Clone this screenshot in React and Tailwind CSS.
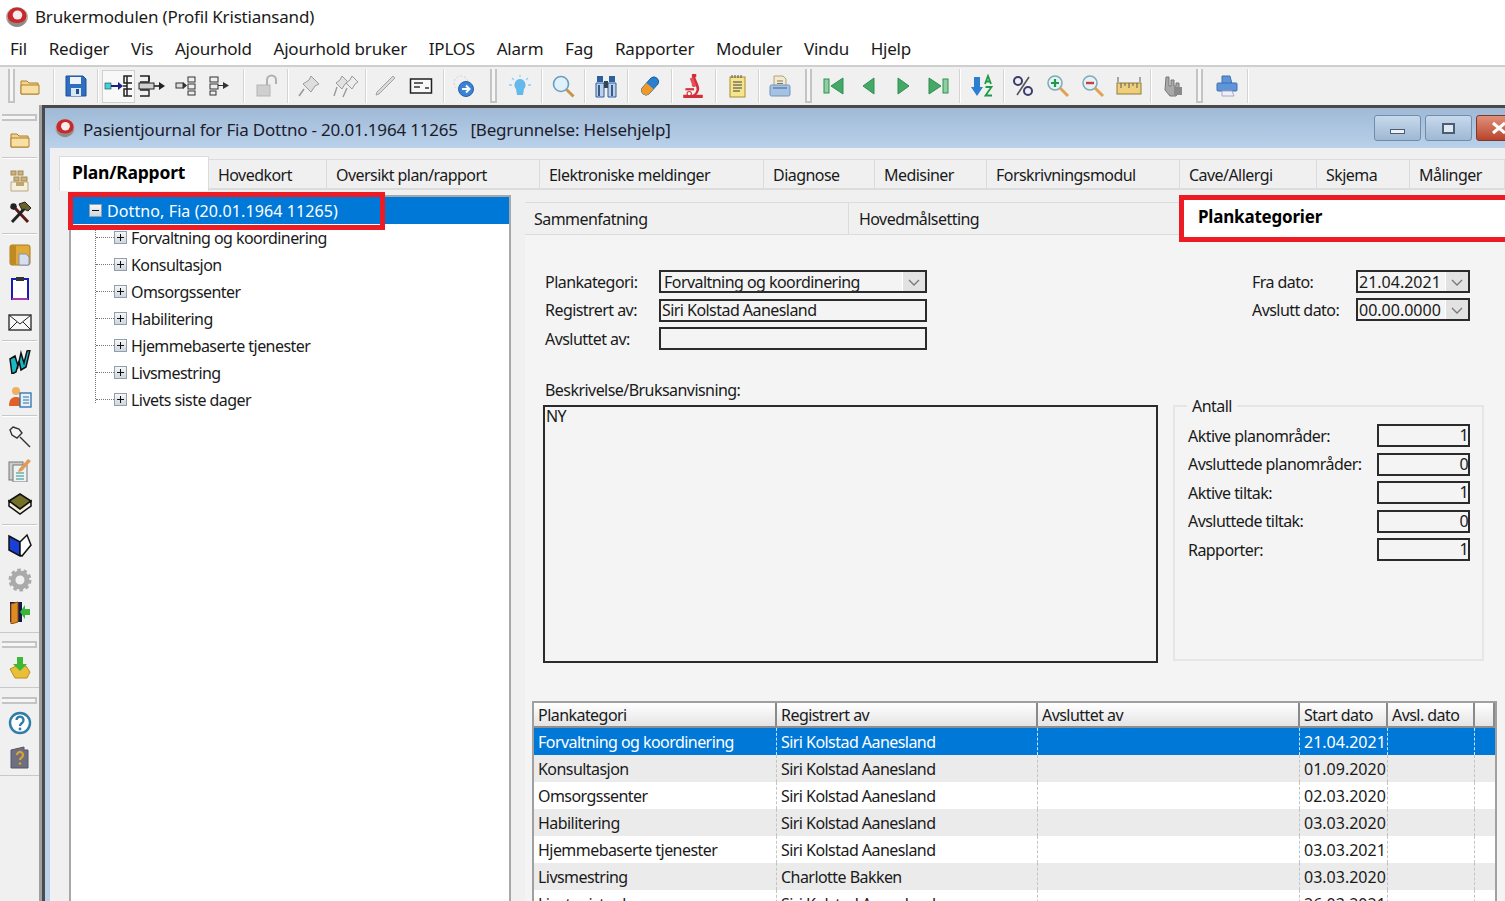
import React from "react";

const S = ({ children, w = 24, h = 24, vb = "0 0 24 24" }) => (
  <svg width={w} height={h} viewBox={vb} className="shrink-0 block">{children}</svg>
);

const Logo = ({ s = 22 }) => (
  <S w={s} h={s}>
    <ellipse cx="12" cy="12" rx="11" ry="10" fill="#b9b4b4" />
    <ellipse cx="12" cy="11" rx="9.500" ry="8.500" fill="#c8282c" />
    <ellipse cx="12.500" cy="10" rx="4.800" ry="4.600" fill="#f6ecec" />
    <path d="M2 14q10 8 20 0q-3 8-10 8t-10-8z" fill="#8f8a8a" />
  </S>
);

const I = {
  folder: () => (
    <S>
      <path d="M3 7h6l2 2h9v11H3z" fill="#f3d48b" stroke="#b07f2a" />
      <path d="M3 11h18v9H3z" fill="#f8dfa4" stroke="#b07f2a" />
    </S>
  ),
  save: () => (
    <S>
      <path d="M2 2h17l3 3v17H2z" fill="#2f6fc0" stroke="#1f4f96" />
      <rect x="6" y="3" width="11" height="7" fill="#eef3fa" />
      <rect x="7" y="14" width="10" height="8" fill="#dbe6f5" />
      <rect x="12" y="15" width="3" height="5" fill="#1f4f96" />
    </S>
  ),
  treeIn: () => (
    <S w={30} h={26} vb="0 0 30 26">
      <rect x="1" y="10" width="6" height="6" fill="#36d6e0" stroke="#333" strokeWidth=".6" />
      <path d="M7 13h9" stroke="#1a237e" strokeWidth="2" />
      <path d="M14 9l5 4-5 4z" fill="#1a237e" />
      <path d="M28 3h-8v7h8M19 13h4M28 16h-8v7h8M23 3v20" fill="none" stroke="#222" strokeWidth="1.5" />
    </S>
  ),
  treeOut: () => (
    <S w={28} h={26} vb="0 0 28 26">
      <path d="M2 3h9v6H2M2 17h9v6H2" fill="none" stroke="#222" strokeWidth="1.4" />
      <rect x="1" y="10" width="15" height="6" fill="#cfcfcf" stroke="#222" strokeWidth="1" />
      <path d="M16 13h6" stroke="#222" strokeWidth="1.6" />
      <path d="M21 9l6 4-6 4z" fill="#222" />
      <path d="M11 3v5" stroke="#222" strokeWidth="1.4" />
    </S>
  ),
  tree3: () => (
    <S>
      <rect x="3" y="9" width="7" height="5" fill="#ddd" stroke="#333" />
      <path d="M10 11h3" stroke="#333" />
      <path d="M10 8l4 3.5-4 3.5z" fill="#333" />
      <rect x="15" y="3" width="7" height="5" fill="#eee" stroke="#333" />
      <rect x="15" y="10" width="7" height="5" fill="#eee" stroke="#333" />
      <rect x="15" y="17" width="7" height="4" fill="#eee" stroke="#333" />
    </S>
  ),
  tree4: () => (
    <S>
      <rect x="3" y="3" width="8" height="5" fill="#eee" stroke="#333" />
      <rect x="3" y="10" width="8" height="5" fill="#eee" stroke="#333" />
      <rect x="3" y="17" width="6" height="4" fill="#eee" stroke="#333" />
      <path d="M11 11.500h6" stroke="#333" />
      <path d="M16 8l6 3.500-6 3.500z" fill="#333" />
    </S>
  ),
  lock: () => (
    <S>
      <rect x="3" y="11" width="13" height="11" fill="#cfcfcf" stroke="#b5b5b5" />
      <path d="M13 11V6a4.500 4.500 0 0 1 9 0v4" fill="none" stroke="#b0b0b0" strokeWidth="2" />
    </S>
  ),
  pin: () => (
    <S>
      <path d="M14 2l8 8-4 2-4 6-8-8 6-4z" fill="#dedede" stroke="#9a9a9a" />
      <path d="M7 15l-5 7" stroke="#9a9a9a" strokeWidth="1.6" />
    </S>
  ),
  pins: () => (
    <S w={28} h={26} vb="0 0 28 26">
      <path d="M10 3l6 6-3 2-3 5-6-6 4-3z" fill="#e2e2e2" stroke="#999" />
      <path d="M20 3l6 6-3 2-3 5-6-6 4-3z" fill="#ededed" stroke="#999" />
      <path d="M5 14l-3 9M15 15l-4 9" stroke="#999" strokeWidth="1.4" />
    </S>
  ),
  pencil: () => (
    <S>
      <path d="M20 2l2 2L6 20l-3 1 1-3z" fill="#d9d9d9" stroke="#a3a3a3" />
    </S>
  ),
  card: () => (
    <S>
      <rect x="1.500" y="5" width="21" height="14" fill="#f8f8f8" stroke="#222" strokeWidth="1.500" />
      <path d="M5 9h9M5 13h6M16 14h4" stroke="#333" strokeWidth="1.400" />
    </S>
  ),
  goto: () => (
    <S>
      <circle cx="10" cy="9" r="7" fill="none" stroke="#cfcfcf" strokeDasharray="2 2" />
      <circle cx="15" cy="15" r="7.500" fill="#3b82d6" stroke="#2563a8" />
      <path d="M11 15h7M15 11.500l3.500 3.500-3.500 3.500" fill="none" stroke="#fff" strokeWidth="2" />
    </S>
  ),
  bulb: () => (
    <S>
      <path d="M12 5a6 6 0 0 1 4 10l-1 6H9l-1-6a6 6 0 0 1 4-10z" fill="#63b9ea" />
      <path d="M12 1v2M4 4l2 2M20 4l-2 2M1 11h3M20 11h3" stroke="#8bd0f2" strokeWidth="1.300" />
    </S>
  ),
  mag: () => (
    <S>
      <circle cx="10" cy="10" r="7.500" fill="#dff1fb" stroke="#6d9cc0" strokeWidth="1.600" />
      <path d="M15.500 15.500l7 7" stroke="#c7944c" strokeWidth="3" />
    </S>
  ),
  bino: () => (
    <S>
      <rect x="3" y="2" width="6" height="6" fill="#2f5f9f" />
      <rect x="15" y="2" width="6" height="6" fill="#2f5f9f" />
      <path d="M2 9h8v14H2zM14 9h8v14h-8z" fill="#bcd0e6" stroke="#2f5f9f" />
      <rect x="10" y="7" width="4" height="7" fill="#345" />
      <path d="M5 11v11M18 11v11" stroke="#1c3d70" strokeWidth="1.600" />
    </S>
  ),
  pill: () => (
    <S>
      <path d="M5 14L14 4a4.700 4.700 0 0 1 7 6l-9 10a4.700 4.700 0 0 1-7-6z" fill="#2b7fd0" stroke="#1f5f9f" />
      <path d="M5 14l4.500-5 7 6L12 20a4.700 4.700 0 0 1-7-6z" fill="#ee9a2a" />
    </S>
  ),
  micro: () => (
    <S w={26} h={28}>
      <path d="M11 1h4v3h-1l3 7a8 8 0 0 1-2 9h6v3H3v-3h9a6 6 0 0 0 3-7l-1-1-1 1-2-1z" fill="#d32f3a" />
      <path d="M9 5l3-1 3 8-3 1z" fill="#e9505a" />
      <rect x="5" y="14" width="8" height="2" fill="#d32f3a" />
      <circle cx="8.500" cy="19" r="2" fill="#fff" stroke="#d32f3a" />
    </S>
  ),
  note: () => (
    <S>
      <rect x="5" y="3" width="15" height="20" fill="#f7e58b" stroke="#a98b35" />
      <path d="M8 8h9M8 11h9M8 14h9M8 17h7" stroke="#776" strokeWidth="1.300" />
      <path d="M7 1v3M10 1v3M13 1v3M16 1v3" stroke="#555" />
    </S>
  ),
  printer: () => (
    <S>
      <path d="M6 2h9l3 3v8H6z" fill="#f3ead2" stroke="#b5a176" />
      <rect x="2" y="11" width="20" height="11" rx="1.500" fill="#a5c2e2" stroke="#6f93bd" />
      <path d="M9 7h6M9 9.500h6" stroke="#776" />
      <rect x="5" y="13" width="14" height="2" fill="#6f93bd" />
    </S>
  ),
  first: () => (
    <S>
      <rect x="2" y="5" width="5" height="14" fill="#8fd0a2" stroke="#2f8f50" />
      <path d="M21 4v16L9 12z" fill="#46a866" stroke="#2f8f50" />
    </S>
  ),
  prev: () => (
    <S>
      <path d="M17 4v16L6 12z" fill="#46a866" stroke="#2f8f50" />
    </S>
  ),
  next: () => (
    <S>
      <path d="M7 4v16l11-8z" fill="#46a866" stroke="#2f8f50" />
    </S>
  ),
  last: () => (
    <S>
      <rect x="17" y="5" width="5" height="14" fill="#8fd0a2" stroke="#2f8f50" />
      <path d="M3 4v16l12-8z" fill="#46a866" stroke="#2f8f50" />
    </S>
  ),
  az: () => (
    <S>
      <path d="M4 3h6v10h3l-6 9-6-9h3z" fill="#2b7fd0" />
      <path d="M15 10l3-8 3 8M16 7.500h4M15.500 13h6l-6 8.500h6.500" fill="none" stroke="#1c9a44" strokeWidth="1.800" />
    </S>
  ),
  pct: () => (
    <S>
      <circle cx="7" cy="7" r="4" fill="none" stroke="#3b3b6e" strokeWidth="2" />
      <circle cx="17" cy="17" r="4" fill="none" stroke="#3b3b6e" strokeWidth="2" />
      <path d="M18 3L6 21" stroke="#555" strokeWidth="1.600" />
    </S>
  ),
  zoomIn: () => (
    <S>
      <circle cx="9" cy="9" r="7" fill="#e3f2f6" stroke="#7fa8b8" strokeWidth="1.500" />
      <path d="M5 9h8M9 5v8" stroke="#1f9a44" strokeWidth="2.200" />
      <path d="M14 14l8 8" stroke="#e2a052" strokeWidth="3" />
    </S>
  ),
  zoomOut: () => (
    <S>
      <circle cx="9" cy="9" r="7" fill="#e3f2f6" stroke="#7fa8b8" strokeWidth="1.500" />
      <path d="M5 9h8" stroke="#d23b3b" strokeWidth="2.400" />
      <path d="M14 14l8 8" stroke="#e2a052" strokeWidth="3" />
    </S>
  ),
  ruler: () => (
    <S w={26} h={24} vb="0 0 26 24">
      <rect x="1" y="9" width="24" height="11" fill="#efcf7a" stroke="#8f7a3a" />
      <path d="M5 9v5M9 9v3M13 9v5M17 9v3M21 9v5M2 3v5M24 3v5" stroke="#5a5a5a" />
    </S>
  ),
  hand: () => (
    <S>
      <path d="M5 3h3v9h2V6h3v6h2V9h3v9l-3 4H9l-5-6z" fill="#a8a8a8" stroke="#777" />
      <rect x="13" y="13" width="8" height="8" fill="#8a8a8a" />
    </S>
  ),
  print2: () => (
    <S>
      <path d="M7 2h8l2 8H7z" fill="#5f95d8" stroke="#3f6fb0" />
      <rect x="2" y="9" width="20" height="8" rx="1" fill="#5f95d8" stroke="#3f6fb0" />
      <path d="M7 17h10l2 5H7z" fill="#eef" stroke="#aab" />
    </S>
  ),
  blocks: () => (
    <S>
      <rect x="3" y="2" width="5" height="4" fill="#cdb27a" stroke="#a58a50" />
      <rect x="10" y="2" width="5" height="4" fill="#cdb27a" stroke="#a58a50" />
      <rect x="6" y="8" width="5" height="4" fill="#cdb27a" stroke="#a58a50" />
      <rect x="13" y="8" width="6" height="4" fill="#cdb27a" stroke="#a58a50" />
      <path d="M3 13h17v9H3z" fill="#f3f0e2" stroke="#bda877" />
      <rect x="8" y="13" width="8" height="4" fill="#c0a56c" />
    </S>
  ),
  tools: () => (
    <S>
      <path d="M20 21L6 6" stroke="#5b1a14" strokeWidth="3" />
      <path d="M3 3a5 5 0 0 0 0 5l3 1 3-3-1-3a5 5 0 0 0-5 0z" fill="#222" />
      <path d="M4 21L17 7" stroke="#222" strokeWidth="3" />
      <path d="M11 3l6-2 6 6-3 3-4-2-2 1z" fill="#6c6228" stroke="#222" />
    </S>
  ),
  docFold: () => (
    <S>
      <rect x="2" y="2" width="20" height="20" rx="2" fill="#e0aa38" stroke="#a87b20" />
      <rect x="2" y="2" width="6" height="20" fill="#bf8a22" />
      <path d="M11 11h7l3 3v8H11z" fill="#d6deef" stroke="#8492b4" />
    </S>
  ),
  clip: () => (
    <S>
      <rect x="4" y="3" width="16" height="20" fill="#fff" stroke="#1a1ab4" strokeWidth="2" />
      <path d="M4 23h16" stroke="#a03aa8" strokeWidth="2" />
      <rect x="8" y="1" width="8" height="4" fill="#333" />
    </S>
  ),
  mail: () => (
    <S>
      <rect x="1" y="5" width="22" height="15" fill="#f7f7f7" stroke="#222" strokeWidth="1.300" />
      <path d="M1 5l11 9 11-9M1 20l8-8M23 20l-8-8" fill="none" stroke="#222" />
    </S>
  ),
  w: () => (
    <S>
      <path d="M2 9l5-3 3 10 3-13 3 10 3-12 3-1-4 17-5 3-2-9-3 11-4 2z" fill="#18b8c4" stroke="#111" strokeWidth="1.500" />
    </S>
  ),
  person: () => (
    <S>
      <circle cx="8" cy="6" r="4" fill="#f0b060" />
      <path d="M1 21c0-7 3-9 7-9s7 2 6 9z" fill="#e0602a" />
      <rect x="12" y="8" width="11" height="14" fill="#e6f0f7" stroke="#2f70a8" strokeWidth="1.300" />
      <path d="M15 12h6M15 15h6M15 18h6" stroke="#2f70a8" />
    </S>
  ),
  pinBlack: () => (
    <S>
      <path d="M5 2l6 2 3 4-5 5-5-3-2-5z" fill="#f4f4f4" stroke="#333" strokeWidth="1.400" />
      <path d="M12 12l10 10" stroke="#333" strokeWidth="1.400" />
    </S>
  ),
  notes: () => (
    <S>
      <rect x="1" y="4" width="14" height="18" fill="#cdcdcd" stroke="#777" />
      <rect x="5" y="7" width="14" height="17" fill="#edf3f3" stroke="#777" />
      <path d="M8 15h8M8 18h8M8 21h8" stroke="#2c8b8b" />
      <path d="M11 11l9-10 3 2-9 10-4 1z" fill="#e39a55" />
    </S>
  ),
  book: () => (
    <S>
      <path d="M1 10L12 3l11 7-11 8z" fill="#747027" stroke="#111" strokeWidth="1.500" />
      <path d="M1 10v5l11 8 11-8v-5l-11 8z" fill="#f2efd8" stroke="#111" strokeWidth="1.500" />
    </S>
  ),
  blueBook: () => (
    <S>
      <path d="M1 3l11 6v14L1 17z" fill="#1a3fd6" stroke="#111" strokeWidth="1.500" />
      <path d="M12 9l7-7 4 10-9 11-2-1z" fill="#fff" stroke="#111" strokeWidth="1.500" />
    </S>
  ),
  gear: () => (
    <S>
      <circle cx="12" cy="12" r="7" fill="none" stroke="#aaaaaa" strokeWidth="5" />
      <circle cx="12" cy="12" r="10" fill="none" stroke="#aaaaaa" strokeWidth="3" strokeDasharray="3.500 2.800" />
    </S>
  ),
  door: () => (
    <S>
      <rect x="2" y="2" width="12" height="20" fill="#111a48" />
      <path d="M3 4l7-2v20l-7 2z" fill="#e08a22" stroke="#8b4f10" />
      <path d="M22 9h-5V5l-5 7 5 7v-4h5z" fill="#38b53a" />
    </S>
  ),
  basket: () => (
    <S>
      <path d="M2 13l6-3h10l4 6-3 6H7z" fill="#e9bf3a" stroke="#b98f18" />
      <path d="M9 1h6v7h4l-7 7-7-7h4z" fill="#3fb83a" />
    </S>
  ),
  help: () => (
    <S>
      <circle cx="12" cy="12" r="10" fill="#fff" stroke="#2e7ca8" strokeWidth="2.400" />
      <path d="M8.500 9a3.500 3.500 0 1 1 5.500 3c-1.300 1-2 1.500-2 3" fill="none" stroke="#2e7ca8" strokeWidth="2.400" />
      <circle cx="12" cy="18" r="1.400" fill="#2e7ca8" />
    </S>
  ),
  manual: () => (
    <S>
      <path d="M3 5l13-3v3h4v18H3z" fill="#6f6f80" stroke="#55556a" />
      <path d="M9 10a3 3 0 1 1 4.500 2.600c-1 .7-1.500 1.200-1.500 2.400" fill="none" stroke="#d9a530" strokeWidth="2.200" />
      <circle cx="12" cy="18.500" r="1.300" fill="#d9a530" />
    </S>
  ),
};

const Sep = () => <div className="w-[2px] h-[34px] bg-[#d4d4d4] border-r border-white shrink-0" />;
const Grip = () => (
  <div className="w-[13px] h-[34px] shrink-0 flex justify-center">
    <div className="w-[7px] h-[34px] border-l-2 border-r-2 border-b-2 border-[#c4c4c4] bg-[#f6f6f6]" />
  </div>
);

const Seg = ({ className, children }) => (
  <div className={`flex items-center justify-around shrink-0 h-full ${className}`}>{children}</div>
);

const Toolbar = () => (
  <div className="h-[40px] flex items-center bg-[#f0f0f0] border-t-2 border-[#cfcfcf] pl-[5px] shrink-0 overflow-hidden">
    <Grip />
    <Seg className="w-[35px] pr-[11px]"><I.folder /></Seg>
    <Sep />
    <Seg className="w-[42px]"><I.save /></Seg>
    <Sep />
    <div className="w-[144px] h-full shrink-0 flex items-center pl-[3px]">
      <div className="w-[33px] h-[33px] flex items-center justify-center bg-[#f8f8f8] border border-[#d0d0d0]"><I.treeIn /></div>
      <div className="ml-[3px]"><I.treeOut /></div>
      <div className="ml-[7px]"><I.tree3 /></div>
      <div className="ml-[10px]"><I.tree4 /></div>
    </div>
    <Sep />
    <Seg className="w-[42px]"><I.lock /></Seg>
    <Sep />
    <Seg className="w-[76px] pl-[2px]"><I.pin /><I.pins /></Seg>
    <Sep />
    <Seg className="w-[76px] pr-[4px]"><I.pencil /><I.card /></Seg>
    <Sep />
    <Seg className="w-[42px] pr-[6px]"><I.goto /></Seg>
    <Grip />
    <Seg className="w-[41px] pr-[2px]"><I.bulb /></Seg>
    <Sep />
    <Seg className="w-[41px] pr-[2px]"><I.mag /></Seg>
    <Sep />
    <Seg className="w-[41px] pr-[2px]"><I.bino /></Seg>
    <Sep />
    <Seg className="w-[42px] pr-[2px]"><I.pill /></Seg>
    <Sep />
    <Seg className="w-[42px] pr-[2px]"><I.micro /></Seg>
    <Sep />
    <Seg className="w-[41px] pr-[2px]"><I.note /></Seg>
    <Sep />
    <Seg className="w-[42px] pr-[2px]"><I.printer /></Seg>
    <Grip />
    <Seg className="w-[144px] pl-[2px] pr-[4px]"><I.first /><I.prev /><I.next /><I.last /></Seg>
    <Sep />
    <Seg className="w-[42px]"><I.az /></Seg>
    <Sep />
    <Seg className="w-[145px] pr-[3px]"><I.pct /><I.zoomIn /><I.zoomOut /><I.ruler /></Seg>
    <Sep />
    <Seg className="w-[41px]"><I.hand /></Seg>
    <Grip />
    <Seg className="w-[41px]"><I.print2 /></Seg>
    <Sep />
  </div>
);

const VSep = ({ className }) => <div className={`h-[2px] w-[35px] ml-[2px] bg-[#c8c8c8] border-b border-white shrink-0 ${className}`} />;
const VLine = ({ className }) => <div className={`h-px bg-[#c8c8c8] w-full shrink-0 ${className}`} />;
const VGrip = ({ className = "" }) => (
  <div className={`w-[35px] h-[7px] ml-[2px] border-t-2 border-b-2 border-r-2 border-[#c4c4c4] bg-[#f6f6f6] shrink-0 ${className}`} />
);
const VIcon = ({ children, className }) => (
  <div className={`w-[39px] flex items-center justify-center shrink-0 ${className}`}>{children}</div>
);

const LeftBar = () => (
  <div className="w-[39px] shrink-0 bg-[#f0f0f0] flex flex-col pt-[9px] overflow-hidden">
    <VGrip />
    <VIcon className="h-[34px] mt-[1px]"><I.folder /></VIcon>
    <VSep className="mt-[1px]" />
    <VIcon className="h-[32px] mt-[6px]"><I.blocks /></VIcon>
    <VIcon className="h-[32px]"><I.tools /></VIcon>
    <VSep className="mt-[4px]" />
    <VIcon className="h-[32px] mt-[4px]"><I.docFold /></VIcon>
    <VIcon className="h-[34px]"><I.clip /></VIcon>
    <VIcon className="h-[34px]"><I.mail /></VIcon>
    <VSep className="mt-[1px]" />
    <VIcon className="h-[32px] mt-[4px]"><I.w /></VIcon>
    <VIcon className="h-[34px] mt-[2px]"><I.person /></VIcon>
    <VSep className="mt-[1px]" />
    <VIcon className="h-[32px] mt-[4px]"><I.pinBlack /></VIcon>
    <VIcon className="h-[34px]"><I.notes /></VIcon>
    <VIcon className="h-[32px]"><I.book /></VIcon>
    <VSep className="mt-[5px]" />
    <VIcon className="h-[34px] mt-[2px]"><I.blueBook /></VIcon>
    <VIcon className="h-[36px]"><I.gear /></VIcon>
    <VIcon className="h-[28px]"><I.door /></VIcon>
    <VLine className="mt-[6px]" />
    <VGrip className="mt-[8px]" />
    <VIcon className="h-[36px] mt-[2px]"><I.basket /></VIcon>
    <VLine className="mt-[1px]" />
    <VGrip className="mt-[9px]" />
    <VIcon className="h-[34px] mt-[2px]"><I.help /></VIcon>
    <VIcon className="h-[34px]"><I.manual /></VIcon>
    <VLine className="mt-[1px]" />
  </div>
);

const mainTabs = [
  ["Hovedkort", "w-[118px]"],
  ["Oversikt plan/rapport", "w-[213px]"],
  ["Elektroniske meldinger", "w-[224px]"],
  ["Diagnose", "w-[111px]"],
  ["Medisiner", "w-[112px]"],
  ["Forskrivningsmodul", "w-[193px]"],
  ["Cave/Allergi", "w-[137px]"],
  ["Skjema", "w-[93px]"],
  ["Målinger", "w-[95px]"],
];

const treeItems = [
  "Forvaltning og koordinering",
  "Konsultasjon",
  "Omsorgssenter",
  "Habilitering",
  "Hjemmebaserte tjenester",
  "Livsmestring",
  "Livets siste dager",
];

const Box = ({ sign }) => (
  <div className="w-[13px] h-[13px] border border-[#8f9fb0] bg-gradient-to-b from-[#f6f6f6] to-[#cfd6dd] flex items-center justify-center shrink-0 relative">
    <div className="w-[7px] h-[1.5px] bg-[#111]" />
    {sign === "+" && <div className="absolute w-[1.5px] h-[7px] bg-[#111]" />}
  </div>
);

const Tree = () => (
  <div className="w-[442px] h-full shrink-0 bg-white border-2 border-[#a8a8a8] border-b-0 relative">
    <div className="h-[27px] bg-[#0078d7] text-white flex items-center pl-[18px] gap-[5px]">
      <Box sign="-" />
      <span className="tracking-[0.1px]">Dottno, Fia (20.01.1964 11265)</span>
    </div>
    <div className="absolute left-[24px] top-[29px] h-[177px] border-l border-dotted border-[#777]" />
    {treeItems.map((t) => (
      <div key={t} className="h-[27px] flex items-center pl-[25px]">
        <div className="w-[18px] border-t border-dotted border-[#777] shrink-0" />
        <Box sign="+" />
        <span className="ml-[4px]">{t}</span>
      </div>
    ))}
    <div className="absolute -left-[3px] -top-[5px] w-[317px] h-[38px] border-[5px] border-[#ed1c24]" />
  </div>
);

const Field = ({ className = "w-[268px]", children }) => (
  <div className={`h-[23px] border-2 border-[#2b2b2b] flex items-center justify-between shrink-0 overflow-hidden ${className}`}>
    {children}
  </div>
);

const Chevron = () => (
  <div className="w-[23px] h-full bg-[#e2e2e2] border-l border-white flex items-center justify-center shrink-0">
    <svg width="14" height="10" viewBox="0 0 14 10"><path d="M2 3l5 5 5-5" fill="none" stroke="#777" strokeWidth="1.300" /></svg>
  </div>
);

const Row = ({ label, children }) => (
  <div className="flex items-center h-[23px]">
    <span className="w-[114px] shrink-0">{label}</span>
    {children}
  </div>
);

const counts = [
  ["Aktive planområder:", "1"],
  ["Avsluttede planområder:", "0"],
  ["Aktive tiltak:", "1"],
  ["Avsluttede tiltak:", "0"],
  ["Rapporter:", "1"],
];

const cols = ["w-[243px]", "w-[261px]", "w-[262px]", "w-[88px]", "w-[87px]", "flex-1"];
const head = ["Plankategori", "Registrert av", "Avsluttet av", "Start dato", "Avsl. dato", ""];
const rows = [
  ["Forvaltning og koordinering", "Siri Kolstad Aanesland", "21.04.2021"],
  ["Konsultasjon", "Siri Kolstad Aanesland", "01.09.2020"],
  ["Omsorgssenter", "Siri Kolstad Aanesland", "02.03.2020"],
  ["Habilitering", "Siri Kolstad Aanesland", "03.03.2020"],
  ["Hjemmebaserte tjenester", "Siri Kolstad Aanesland", "03.03.2021"],
  ["Livsmestring", "Charlotte Bakken", "03.03.2020"],
  ["Livets siste dager", "Siri Kolstad Aanesland", "26.03.2021"],
];

const Table = () => (
  <div className="ml-[7px] w-[965px] border-2 border-b-0 border-[#a0a0a0] bg-white overflow-hidden flex-1 min-h-0">
    <div className="flex h-[25px] border-b-2 border-[#8e8e8e] bg-gradient-to-b from-white to-[#e4e4e4]">
      {head.map((h, i) => (
        <div key={i} className={`${cols[i]} shrink-0 px-[4px] flex items-center whitespace-nowrap border-r-2 border-[#8a8a8a]`}>{h}</div>
      ))}
    </div>
    {rows.map((r, i) => {
      const cells = [r[0], r[1], "", r[2], "", ""];
      const bg = i === 0 ? "bg-[#0078d7] text-white" : i % 2 ? "bg-[#ebebeb]" : "bg-white";
      const dash = i === 0 ? "border-[#cfe3f5]" : "border-[#c4c4c4]";
      return (
        <div key={i} className={`flex h-[27px] ${bg}`}>
          {cells.map((c, j) => (
            <div key={j} className={`${cols[j]} shrink-0 px-[4px] flex items-center whitespace-nowrap ${j === 3 ? "tracking-[0px]" : ""} ${j < 5 ? `border-r border-dashed ${dash}` : ""}`}>{c}</div>
          ))}
        </div>
      );
    })}
  </div>
);

const Detail = () => (
  <div className="flex-1 h-full flex flex-col min-w-0 relative">
    <div className="h-[40px] flex items-end shrink-0 pt-[7px]">
      <div className="w-[324px] h-[33px] bg-[#f0f0f0] border-y border-r border-[#dcdcdc] pl-[9px] flex items-center">Sammenfatning</div>
      <div className="w-[331px] h-[33px] bg-[#f0f0f0] border-y border-r border-[#dcdcdc] pl-[10px] flex items-center">Hovedmålsetting</div>
      <div className="flex-1 h-[33px] bg-white" />
    </div>
    <div className="absolute left-[654px] top-0 right-0 h-[47px] border-[5px] border-r-0 border-[#ed1c24] bg-white flex items-center pl-[14px] pb-[4px] font-bold text-black text-[17px] tracking-[-0.2px]">Plankategorier</div>
    <div className="flex-1 min-h-0 bg-[#f4f4f4] flex flex-col pt-[35px]">
      <div className="flex h-[80px] shrink-0 pl-[20px] pr-[35px] justify-between">
        <div className="flex flex-col gap-[5.5px]">
          <Row label="Plankategori:">
            <Field><span className="pl-[3px] whitespace-nowrap">Forvaltning og koordinering</span><Chevron /></Field>
          </Row>
          <Row label="Registrert av:">
            <Field><span className="pl-[1px]">Siri Kolstad Aanesland</span></Field>
          </Row>
          <Row label="Avsluttet av:"><Field /></Row>
        </div>
        <div className="flex flex-col gap-[5px]">
          <div className="flex items-center h-[23px]">
            <span className="w-[104px]">Fra dato:</span>
            <Field className="w-[114px]"><span className="pl-[1px] tracking-[0px]">21.04.2021</span><Chevron /></Field>
          </div>
          <div className="flex items-center h-[23px]">
            <span className="w-[104px]">Avslutt dato:</span>
            <Field className="w-[114px]"><span className="pl-[1px] tracking-[0px]">00.00.0000</span><Chevron /></Field>
          </div>
        </div>
      </div>
      <div className="pl-[20px] mt-[26px] h-[27px] flex items-center shrink-0">Beskrivelse/Bruksanvisning:</div>
      <div className="flex h-[258px] shrink-0 pl-[18px] mt-[2px]">
        <div className="w-[615px] h-[258px] border-2 border-[#2b2b2b] pl-[1px] leading-[18px]">NY</div>
        <div className="relative ml-[15px] w-[311px] h-[256px] border-2 border-[#e6e6e6] pl-[13px] pt-[17px] flex flex-col gap-[5.5px]">
          <span className="absolute left-[12px] -top-[12px] bg-[#f4f4f4] px-[5px] leading-[22px]">Antall</span>
          {counts.map(([l, v]) => (
            <div key={l} className="flex items-center h-[23px] shrink-0">
              <span className="w-[189px] shrink-0 whitespace-nowrap">{l}</span>
              <div className="w-[93px] h-[23px] border-2 border-[#2b2b2b] text-right leading-[19px]">{v}</div>
            </div>
          ))}
        </div>
      </div>
      <div className="h-[38px] shrink-0" />
      <Table />
    </div>
  </div>
);

const Window = () => (
  <div className="flex-1 min-w-0 flex flex-col border-t-[3px] border-l-[3px] border-[#4a4a4a] ml-[3px] overflow-hidden">
    <div className="h-[40px] shrink-0 bg-gradient-to-b from-[#9fb9d6] to-[#b9d1ea] flex items-center pl-[9px] gap-[7px]">
      <Logo s={22} />
      <span className="text-[#1c1c2c] whitespace-pre text-[17px] tracking-[-0.2px] mt-[3px]">Pasientjournal for Fia Dottno - 20.01.1964 11265   [Begrunnelse: Helsehjelp]</span>
      <div className="ml-auto flex gap-[4px] shrink-0 -mr-[18px]">
        <div className="w-[47px] h-[26px] rounded-[3px] border border-[#6f8cab] bg-gradient-to-b from-[#c8d9ec] to-[#9fb8d4] flex items-center justify-center">
          <div className="w-[15px] h-[5px] bg-[#eef2f6] border border-[#4b5d72] mt-[6px]" />
        </div>
        <div className="w-[47px] h-[26px] rounded-[3px] border border-[#6f8cab] bg-gradient-to-b from-[#c8d9ec] to-[#9fb8d4] flex items-center justify-center">
          <div className="w-[13px] h-[11px] border-2 border-[#4b5d72] bg-[#dfe7f0]" />
        </div>
        <div className="w-[47px] h-[26px] rounded-[3px] border border-[#7a3a2c] bg-gradient-to-b from-[#e0907a] to-[#b8432a] flex items-center pl-[14px]">
          <svg width="16" height="14" viewBox="0 0 16 14"><path d="M2 2l12 10M14 2L2 12" stroke="#fff" strokeWidth="3" /></svg>
        </div>
      </div>
    </div>
    <div className="flex-1 min-h-0 flex border-l-[5px] border-[#b9d1ea]">
      <div className="flex-1 min-w-0 bg-[#f0f0f0] flex flex-col pt-[8px] pl-[9px]">
        <div className="flex h-[34px] shrink-0 border-b border-[#dcdcdc]">
          <div className="w-[150px] h-[35px] bg-white border-x border-t border-[#dcdcdc] pl-[12px] pb-[4px] flex items-center font-bold text-black text-[17.5px] tracking-[-0.2px] relative z-10">Plan/Rapport</div>
          {mainTabs.map(([t, w]) => (
            <div key={t} className={`${w} shrink-0 mt-[3px] pt-[2px] border-y border-r border-[#dcdcdc] pl-[9px] flex items-center whitespace-nowrap`}>{t}</div>
          ))}
        </div>
        <div className="flex-1 min-h-0 flex pt-[5px] pl-[10px] gap-[14px]">
          <Tree />
          <Detail />
        </div>
      </div>
    </div>
  </div>
);

export default function App() {
  return (
    <div className="w-[1505px] h-[901px] overflow-hidden flex flex-col bg-white text-[#1a1a1a] text-[16px] tracking-[-0.55px]" style={{ fontFamily: '"Noto Sans", "Liberation Sans", sans-serif' }}>
      <div className="h-[35px] shrink-0 flex items-center pl-[5px] pb-[2px] gap-[6px] text-[17px] tracking-[-0.2px]">
        <Logo s={24} />
        <span>Brukermodulen (Profil Kristiansand)</span>
      </div>
      <div className="h-[30px] shrink-0 flex items-center pl-[10px] pb-[2px] gap-[21.7px] text-[17px] tracking-[-0.2px]">
        {["Fil", "Rediger", "Vis", "Ajourhold", "Ajourhold bruker", "IPLOS", "Alarm", "Fag", "Rapporter", "Moduler", "Vindu", "Hjelp"].map((m) => (
          <span key={m}>{m}</span>
        ))}
      </div>
      <Toolbar />
      <div className="flex-1 min-h-0 flex bg-[#a0a0a0]">
        <LeftBar />
        <Window />
      </div>
    </div>
  );
}
